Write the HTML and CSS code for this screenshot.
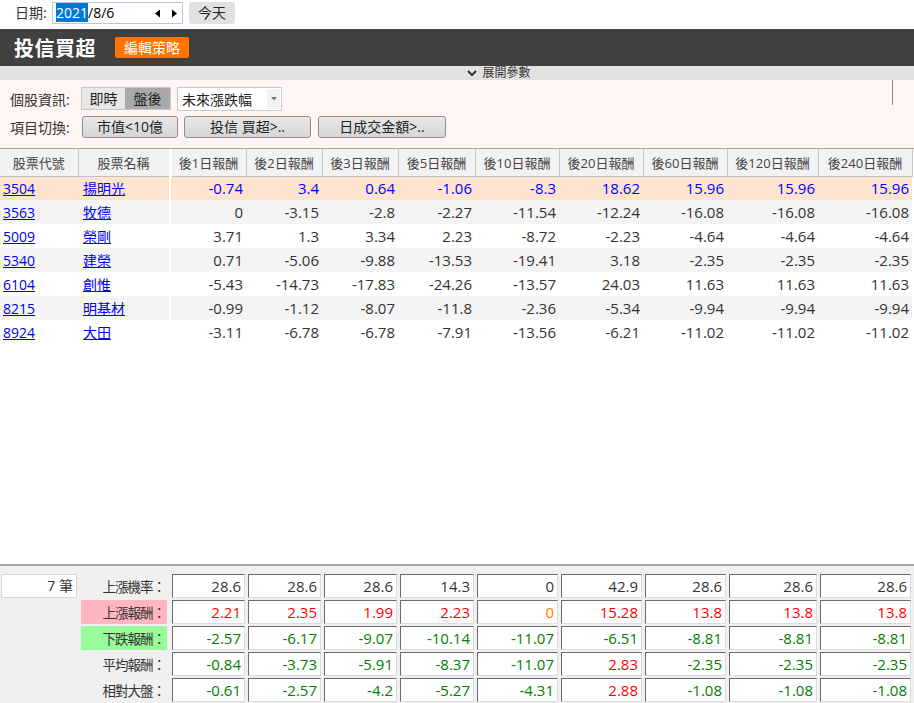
FILE: index.html
```html
<!DOCTYPE html>
<html lang="zh-Hant">
<head>
<meta charset="utf-8">
<title>投信買超</title>
<link rel="stylesheet" href="styles.css">
</head>
<body>
<div class="page">
  <div class="topbar">
    <span class="date-label">日期:</span>
    <div class="date-input">
      <span class="date-text"><span class="sel">2021</span>/8/6</span>
      <span class="arrows">
        <svg width="7" height="9" viewBox="0 0 7 9"><path d="M6 0.5 L1 4.5 L6 8.5 Z" fill="#000"/></svg>
        <svg width="7" height="9" viewBox="0 0 7 9"><path d="M1 0.5 L6 4.5 L1 8.5 Z" fill="#000"/></svg>
      </span>
    </div>
    <button class="today">今天</button>
  </div>

  <div class="titlebar">
    <span class="title">投信買超</span>
    <button class="edit">編輯策略</button>
  </div>

  <div class="expander">
    <svg width="10" height="7" viewBox="0 0 10 7"><path d="M1 1 L5 5 L9 1" stroke="#333" stroke-width="2" fill="none"/></svg>
    <span>展開參數</span>
  </div>

  <div class="params">
    <div class="param-rows">
      <div class="prow">
        <span class="plabel">個股資訊:</span>
        <div class="toggle"><span class="tg">即時</span><span class="tg on">盤後</span></div>
        <div class="select"><span class="sel-text">未來漲跌幅</span><span class="sel-arrow"><svg width="6" height="4" viewBox="0 0 6 4"><path d="M0 0 L6 0 L3 3.5 Z" fill="#777"/></svg></span></div>
      </div>
      <div class="prow">
        <span class="plabel">項目切換:</span>
        <button class="pbtn w96">市值&lt;10億</button>
        <button class="pbtn w127">投信 買超&gt;..</button>
        <button class="pbtn w128">日成交金額&gt;..</button>
      </div>
    </div>
    <div class="vline"></div>
  </div>

  <div class="main">
    <table class="grid">
      <colgroup>
        <col style="width:78px"><col style="width:92px"><col style="width:76px"><col style="width:76px"><col style="width:76px"><col style="width:77px"><col style="width:84px"><col style="width:84px"><col style="width:84px"><col style="width:91px"><col style="width:94px">
      </colgroup>
      <thead>
        <tr>
          <th>股票代號</th><th class="split">股票名稱</th><th>後1日報酬</th><th>後2日報酬</th><th>後3日報酬</th><th>後5日報酬</th><th>後10日報酬</th><th>後20日報酬</th><th>後60日報酬</th><th>後120日報酬</th><th>後240日報酬</th>
        </tr>
      </thead>
      <tbody>
        <tr class="hl"><td><a href="#">3504</a></td><td class="split"><a href="#">揚明光</a></td><td>-0.74</td><td>3.4</td><td>0.64</td><td>-1.06</td><td>-8.3</td><td>18.62</td><td>15.96</td><td>15.96</td><td>15.96</td></tr>
        <tr class="alt"><td><a href="#">3563</a></td><td class="split"><a href="#">牧德</a></td><td>0</td><td>-3.15</td><td>-2.8</td><td>-2.27</td><td>-11.54</td><td>-12.24</td><td>-16.08</td><td>-16.08</td><td>-16.08</td></tr>
        <tr><td><a href="#">5009</a></td><td class="split"><a href="#">榮剛</a></td><td>3.71</td><td>1.3</td><td>3.34</td><td>2.23</td><td>-8.72</td><td>-2.23</td><td>-4.64</td><td>-4.64</td><td>-4.64</td></tr>
        <tr class="alt"><td><a href="#">5340</a></td><td class="split"><a href="#">建榮</a></td><td>0.71</td><td>-5.06</td><td>-9.88</td><td>-13.53</td><td>-19.41</td><td>3.18</td><td>-2.35</td><td>-2.35</td><td>-2.35</td></tr>
        <tr><td><a href="#">6104</a></td><td class="split"><a href="#">創惟</a></td><td>-5.43</td><td>-14.73</td><td>-17.83</td><td>-24.26</td><td>-13.57</td><td>24.03</td><td>11.63</td><td>11.63</td><td>11.63</td></tr>
        <tr class="alt"><td><a href="#">8215</a></td><td class="split"><a href="#">明基材</a></td><td>-0.99</td><td>-1.12</td><td>-8.07</td><td>-11.8</td><td>-2.36</td><td>-5.34</td><td>-9.94</td><td>-9.94</td><td>-9.94</td></tr>
        <tr><td><a href="#">8924</a></td><td class="split"><a href="#">大田</a></td><td>-3.11</td><td>-6.78</td><td>-6.78</td><td>-7.91</td><td>-13.56</td><td>-6.21</td><td>-11.02</td><td>-11.02</td><td>-11.02</td></tr>
      </tbody>
    </table>
  </div>

  <div class="summary">
    <div class="sgrid">
      <div class="count">7 筆</div>
      <div class="slabel">上漲機率：</div>
      <div class="sv">28.6</div><div class="sv">28.6</div><div class="sv">28.6</div><div class="sv">14.3</div><div class="sv">0</div><div class="sv">42.9</div><div class="sv">28.6</div><div class="sv">28.6</div><div class="sv">28.6</div>

      <div class="blank"></div>
      <div class="slabel pink">上漲報酬：</div>
      <div class="sv up">2.21</div><div class="sv up">2.35</div><div class="sv up">1.99</div><div class="sv up">2.23</div><div class="sv zero">0</div><div class="sv up">15.28</div><div class="sv up">13.8</div><div class="sv up">13.8</div><div class="sv up">13.8</div>

      <div class="blank"></div>
      <div class="slabel green">下跌報酬：</div>
      <div class="sv dn">-2.57</div><div class="sv dn">-6.17</div><div class="sv dn">-9.07</div><div class="sv dn">-10.14</div><div class="sv dn">-11.07</div><div class="sv dn">-6.51</div><div class="sv dn">-8.81</div><div class="sv dn">-8.81</div><div class="sv dn">-8.81</div>

      <div class="blank"></div>
      <div class="slabel">平均報酬：</div>
      <div class="sv dn">-0.84</div><div class="sv dn">-3.73</div><div class="sv dn">-5.91</div><div class="sv dn">-8.37</div><div class="sv dn">-11.07</div><div class="sv up">2.83</div><div class="sv dn">-2.35</div><div class="sv dn">-2.35</div><div class="sv dn">-2.35</div>

      <div class="blank"></div>
      <div class="slabel">相對大盤：</div>
      <div class="sv dn">-0.61</div><div class="sv dn">-2.57</div><div class="sv dn">-4.2</div><div class="sv dn">-5.27</div><div class="sv dn">-4.31</div><div class="sv up">2.88</div><div class="sv dn">-1.08</div><div class="sv dn">-1.08</div><div class="sv dn">-1.08</div>
    </div>
  </div>
</div>
</body>
</html>
```

FILE: styles.css
```css
* { box-sizing: border-box; }
html, body { margin: 0; padding: 0; background: #fff; }
body {
  font-family: "Open Sans", "Noto Sans CJK TC", sans-serif;
  color: #333;
  font-size: 14px;
}
.page {
  width: 914px;
  height: 703px;
  display: flex;
  flex-direction: column;
  overflow: hidden;
}
button { font-family: inherit; cursor: pointer; }

/* top bar */
.topbar {
  height: 29px;
  display: flex;
  align-items: flex-start;
  padding-top: 2px;
}
.date-label {
  margin-left: 15px;
  width: 37px;
  line-height: 22px;
  font-size: 14px;
  color: #333;
}
.date-input {
  width: 131px;
  height: 22px;
  border: 1px solid #c3c3dc;
  display: flex;
  align-items: center;
  padding-left: 3px;
  padding-right: 4px;
}
.date-text { font-size: 14px; line-height: 16px; color: #000; flex: 1; }
.date-text .sel { background: #0078d7; color: #fff; }
.arrows { display: flex; gap: 10px; align-items: center; }
.arrows svg { display: block; }
.today {
  margin-left: 6px;
  width: 46px;
  height: 22px;
  border: none;
  border-radius: 3px;
  background: #e1e1e1;
  font-size: 14px;
  color: #222;
  padding: 0;
  line-height: 22px;
}

/* title bar */
.titlebar {
  height: 37px;
  background: #404040;
  display: flex;
  align-items: center;
  padding-left: 14px;
}
.title {
  color: #fff;
  font-size: 20px;
  font-weight: bold;
  letter-spacing: 0.5px;
  font-family: "Noto Sans CJK TC", sans-serif;
}
.edit {
  margin-left: 19px;
  width: 74px;
  height: 21px;
  border: none;
  border-radius: 2px;
  background: #ff7300;
  color: #fff;
  font-size: 14px;
  padding: 0;
  line-height: 21px;
}

/* expander */
.expander {
  height: 14px;
  background: #e1e1e1;
  display: flex;
  justify-content: center;
  align-items: center;
  gap: 5px;
  font-size: 12px;
  line-height: 14px;
  color: #333;
  padding-left: 84px;
}
.expander svg { display: block; }

/* params */
.params {
  height: 69px;
  background: #fff6f3;
  border-bottom: 1px solid #a8a8a8;
  display: flex;
  align-items: flex-start;
}
.param-rows {
  padding-top: 7px;
  padding-left: 10px;
  display: flex;
  flex-direction: column;
  gap: 5px;
}
.prow { display: flex; align-items: center; height: 23px; }
.plabel { width: 70px; font-size: 14px; color: #333; }
.toggle {
  display: flex;
  height: 23px;
  border: 1px solid #c8c8c8;
  margin-left: 1px;
}
.tg {
  width: 43px;
  line-height: 21px;
  text-align: center;
  background: #e7e7e7;
  font-size: 14px;
  color: #222;
}
.tg.on { background: #a9a9a9; width: 45px; }
.select {
  margin-left: 6px;
  width: 105px;
  height: 24px;
  background: #fff;
  border: 1px solid #c9c9d4;
  display: flex;
  align-items: center;
}
.sel-text { flex: 1; padding-left: 4px; font-size: 14px; color: #222; }
.sel-arrow {
  width: 13px;
  height: 20px;
  background: #f3f3f3;
  display: flex;
  align-items: center;
  justify-content: center;
  margin-right: 1px;
}
.sel-arrow svg { display: block; }
.pbtn {
  height: 22px;
  margin-left: 2px;
  margin-right: 4px;
  border: 1px solid #8e8e8e;
  border-radius: 3px;
  background: linear-gradient(#e8e8e8, #d6d6d6);
  font-size: 14px;
  color: #222;
  padding: 0;
  line-height: 20px;
}
.pbtn + .pbtn { margin-left: 2px; }
.w96 { width: 96px; }
.w127 { width: 127px; }
.w128 { width: 128px; margin-left: 3px !important; }
.vline {
  width: 1px;
  height: 25px;
  background: #8a8a8a;
  margin-left: auto;
  margin-right: 21px;
}

/* grid */
.main { flex: 1; background: #fff; }
.grid {
  border-collapse: collapse;
  table-layout: fixed;
  width: 912px;
}
.grid th {
  height: 27px;
  background: #f2f2f2;
  border-right: 1px solid #c6c6c6;
  border-bottom: 1px solid #c0c0c0;
  font-weight: normal;
  font-size: 13px;
  color: #444;
  text-align: center;
  padding: 0;
  font-family: "Open Sans", "Noto Sans CJK TC", sans-serif;
}
.grid td {
  height: 24px;
  padding: 0 3px 0 3px;
  text-align: right;
  font-size: 15px;
  color: #333;
  white-space: nowrap;
}
.grid td:first-child { text-align: left; }
.grid td:nth-child(2) { text-align: left; padding-left: 5px; }
.grid td.split { border-right: 2px solid #fff; }
.grid th.split { border-right: 3px solid #fff; }
.grid tr.alt td { background: #f4f4f4; }
.grid tr.hl td { background: #fde4cf; color: #0000ff; }
.grid a { color: #0000ee; text-decoration: underline; font-size: 14px; }

/* summary */
.summary {
  height: 139px;
  background: #f0f0f0;
  border-top: 2px solid #a6a6a6;
  padding-top: 8px;
}
.sgrid {
  display: grid;
  grid-template-columns: 78px 92px 76px 76px 76px 77px 84px 84px 84px 91px 94px;
  grid-auto-rows: 24px;
  row-gap: 2px;
}
.count {
  margin-left: 1px;
  margin-right: 1px;
  background: #fff;
  border: 1px solid #d6d6d6;
  text-align: right;
  padding-right: 3px;
  line-height: 22px;
  font-size: 14px;
  color: #333;
}
.slabel {
  margin-left: 3px;
  margin-right: 3px;
  text-align: right;
  padding-right: 2px;
  line-height: 24px;
  font-size: 13.5px;
  letter-spacing: -1px;
  color: #333;
  font-family: "Noto Sans CJK TC", sans-serif;
}
.slabel.pink { background: #ffb6c1; }
.slabel.green { background: #98fb98; }
.sv {
  margin-left: 2px;
  margin-right: 1px;
  background: #fff;
  border-top: 1px solid #6a6a6a;
  border-left: 1px solid #6a6a6a;
  border-right: 1px solid #dcdcdc;
  border-bottom: 1px solid #dcdcdc;
  text-align: right;
  padding-right: 3px;
  line-height: 22px;
  font-size: 15px;
  color: #333;
}
.sv.up { color: #ff0000; }
.sv.zero { color: #ff7f00; }
.sv.dn { color: #008000; }
```
